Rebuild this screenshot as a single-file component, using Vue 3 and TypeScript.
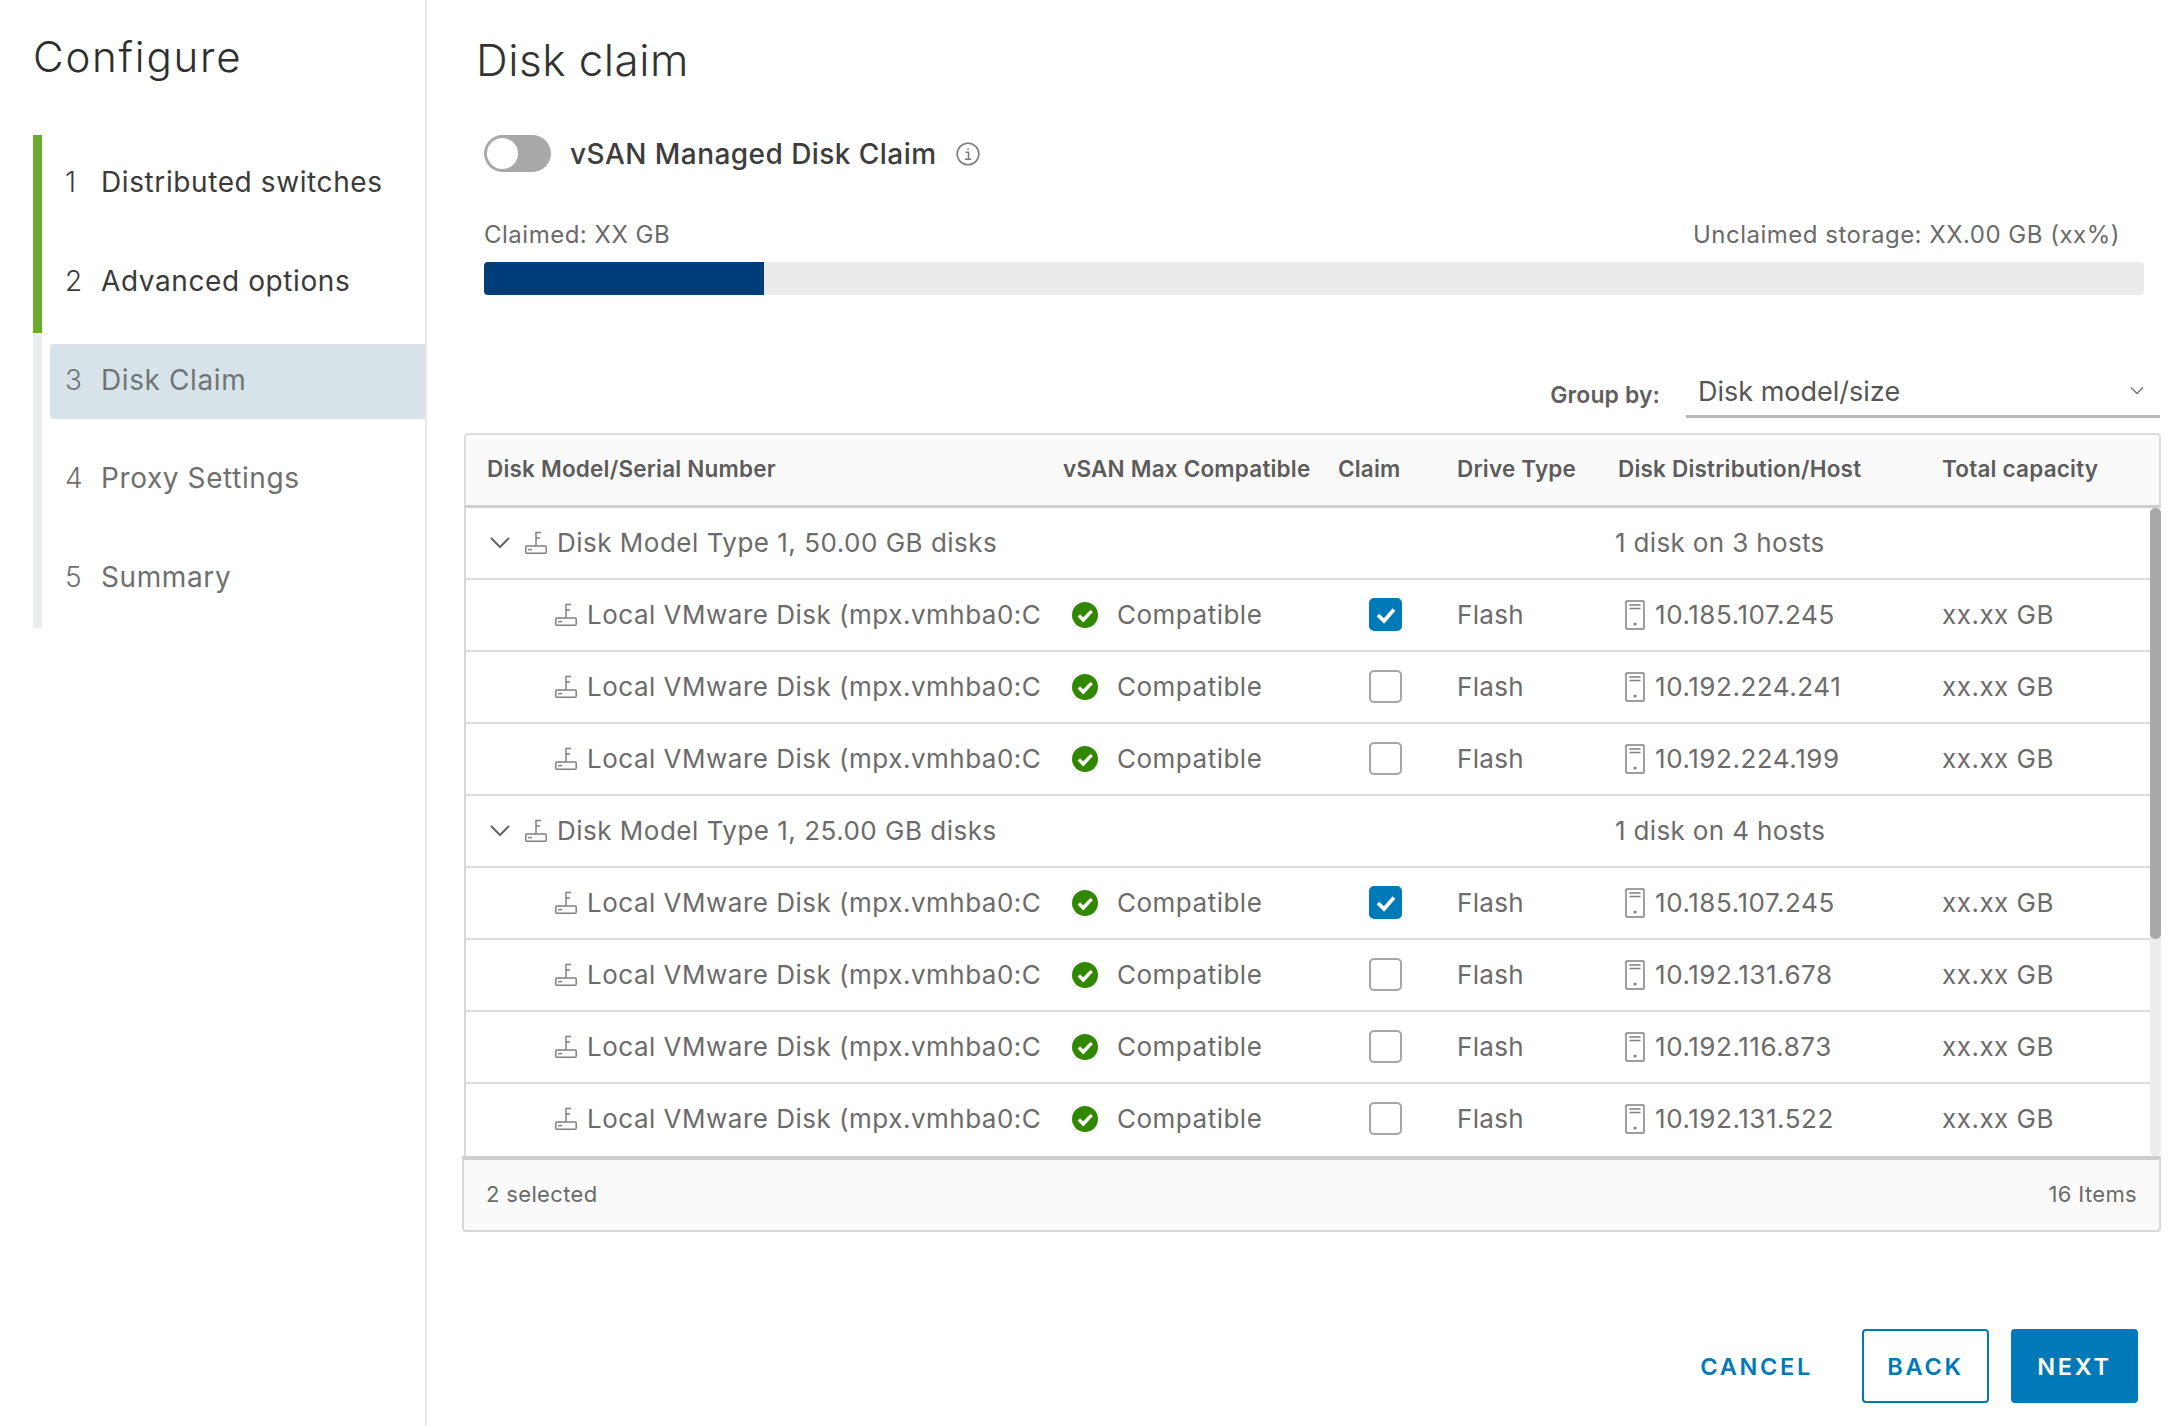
<script setup lang="ts">
interface Row {
  kind: 'group' | 'disk'
  name: string
  host?: string
  claimed?: boolean
  summary?: string
}

const steps = ['Distributed switches', 'Advanced options', 'Disk Claim', 'Proxy Settings', 'Summary']
const disk = 'Local VMware Disk (mpx.vmhba0:C'

const rows: Row[] = [
  { kind: 'group', name: 'Disk Model Type 1, 50.00 GB disks', summary: '1 disk on 3 hosts' },
  { kind: 'disk', name: disk, host: '10.185.107.245', claimed: true },
  { kind: 'disk', name: disk, host: '10.192.224.241' },
  { kind: 'disk', name: disk, host: '10.192.224.199' },
  { kind: 'group', name: 'Disk Model Type 1, 25.00 GB disks', summary: '1 disk on 4 hosts' },
  { kind: 'disk', name: disk, host: '10.185.107.245', claimed: true },
  { kind: 'disk', name: disk, host: '10.192.131.678' },
  { kind: 'disk', name: disk, host: '10.192.116.873' },
  { kind: 'disk', name: disk, host: '10.192.131.522' },
]
</script>

<template>
  <div class="page">
    <aside class="side">
      <h2 class="side-title">Configure</h2>
      <div class="wizard">
        <div class="rail"><div class="rail-done"></div></div>
        <ol class="steps">
          <li
            v-for="(s, i) in steps"
            :key="s"
            class="step"
            :class="{ done: i < 2, active: i === 2 }"
          >
            <span class="num">{{ i + 1 }}</span><span class="lbl">{{ s }}</span>
          </li>
        </ol>
      </div>
    </aside>

    <main class="main">
      <h1 class="title">Disk claim</h1>

      <div class="toggle-row">
        <span class="toggle"><span class="knob"></span></span>
        <span class="toggle-lbl">vSAN Managed Disk Claim</span>
        <svg class="info" viewBox="0 0 24 24" width="24" height="24" fill="none" stroke="#7a7a7a" stroke-width="1.5">
          <circle cx="12" cy="12" r="10.8" />
          <path d="M9.5 10.2h3v7M9 17.2h6.2" />
          <path d="M11.3 6.2h1.6v1.6h-1.6z" fill="#7a7a7a" stroke="none" />
        </svg>
      </div>

      <div class="cap-row">
        <span>Claimed: XX GB</span>
        <span>Unclaimed storage: XX.00 GB (xx%)</span>
      </div>
      <div class="bar"><div class="bar-fill"></div></div>

      <div class="group-row">
        <span class="group-lbl">Group by:</span>
        <div class="select">
          <span class="select-val">Disk model/size</span>
          <svg width="14" height="9" viewBox="0 0 14 9" fill="none" stroke="#777" stroke-width="1.5"><path d="M1 1.5l6 6 6-6" /></svg>
        </div>
      </div>

      <section class="table">
        <div class="thead cols">
          <span>Disk Model/Serial Number</span>
          <span>vSAN Max Compatible</span>
          <span>Claim</span>
          <span>Drive Type</span>
          <span>Disk Distribution/Host</span>
          <span>Total capacity</span>
        </div>
        <div class="tbody">
          <div class="rows">
            <div v-for="(r, i) in rows" :key="i" class="row cols">
              <template v-if="r.kind === 'group'">
                <div class="name group">
                  <svg class="chev" width="20" height="12" viewBox="0 0 20 12" fill="none" stroke="#666" stroke-width="2"><path d="M1 1l9 9 9-9" /></svg>
                  <svg class="dicon" width="22" height="23" viewBox="0 0 22 23" fill="none" stroke="#808080" stroke-width="1.5">
                    <path d="M11 15V1.5h5M11 7h4" />
                    <rect x="0.8" y="15" width="20.4" height="7.2" rx="1" />
                    <path d="M3 18.6h4" />
                  </svg>
                  <span class="txt">{{ r.name }}</span>
                </div>
                <span></span><span></span><span></span>
                <span class="summary">{{ r.summary }}</span>
                <span></span>
              </template>
              <template v-else>
                <div class="name disk">
                  <svg class="dicon" width="22" height="23" viewBox="0 0 22 23" fill="none" stroke="#808080" stroke-width="1.5">
                    <path d="M11 15V1.5h5M11 7h4" />
                    <rect x="0.8" y="15" width="20.4" height="7.2" rx="1" />
                    <path d="M3 18.6h4" />
                  </svg>
                  <span class="txt">{{ r.name }}</span>
                </div>
                <div class="compat">
                  <svg width="26" height="26" viewBox="0 0 26 26">
                    <circle cx="13" cy="13" r="13" fill="#318700" />
                    <path d="M6.8 13.5l4.5 4.5L19.7 8.8" fill="none" stroke="#fff" stroke-width="3.4" />
                  </svg>
                  <span>Compatible</span>
                </div>
                <div class="claim">
                  <span class="check" :class="{ on: r.claimed }">
                    <svg v-if="r.claimed" width="22" height="18" viewBox="0 0 22 18" fill="none" stroke="#fff" stroke-width="3.8"><path d="M3 9l6 6L19 3.5" /></svg>
                  </span>
                </div>
                <span class="flash">Flash</span>
                <div class="host">
                  <svg width="20" height="30" viewBox="0 0 20 30" fill="none" stroke="#808080" stroke-width="1.5">
                    <rect x="1" y="1" width="18" height="28" rx="1" />
                    <path d="M4.5 5h11M4.5 8.5h11" />
                    <circle cx="10" cy="24" r="1.6" fill="#808080" stroke="none" />
                  </svg>
                  <span class="ip">{{ r.host }}</span>
                </div>
                <span>xx.xx GB</span>
              </template>
            </div>
          </div>
          <div class="scroll"><div class="thumb"></div></div>
        </div>
        <div class="tfoot">
          <span>2 selected</span>
          <span>16 Items</span>
        </div>
      </section>

      <div class="actions">
        <button class="btn link">CANCEL</button>
        <button class="btn outline">BACK</button>
        <button class="btn solid">NEXT</button>
      </div>
    </main>
  </div>
</template>

<style>
html, body { margin: 0; background: #fff; }
</style>

<style scoped>
.page {
  display: flex;
  width: 2176px;
  height: 1426px;
  overflow: hidden;
  background: #fff;
  font-family: Inter, "Liberation Sans", sans-serif;
  color: #5f5f5f;
}
.side {
  width: 427px;
  flex: none;
  box-sizing: border-box;
  border-right: 2px solid #e8e8e8;
  padding-left: 33px;
}
.side-title {
  margin: 0;
  height: 135px;
  box-sizing: border-box;
  padding-top: 31px;
  font-size: 42px;
  line-height: 52px;
  font-weight: 300;
  color: #2e2e2e;
  letter-spacing: 1.8px;
}
.wizard { display: flex; gap: 8px; }
.rail { width: 9px; height: 493px; background: #ebecee; }
.rail-done { height: 198px; background: #6aa92a; }
.steps {
  flex: 1;
  list-style: none;
  margin: 0;
  padding: 11px 0 0;
}
.step {
  display: flex;
  align-items: center;
  height: 75px;
  margin-bottom: 23.75px;
  box-sizing: border-box;
  padding: 0 0 3px 15px;
  font-size: 28px;
  color: #6f6f6f;
  border-radius: 4px 0 0 4px;
  letter-spacing: 0.6px;
}
.step.done { color: #3a3a3a; }
.step.active { background: #d8e3e9; color: #6f7578; }
.num { width: 36px; flex: none; font-weight: 300; }
.lbl { white-space: nowrap; }

.main {
  flex: 1;
  min-width: 0;
  display: flex;
  flex-direction: column;
  padding: 0 16px 0 38px;
}
.title {
  margin: 30px 0 0 11px;
  font-size: 44px;
  line-height: 60px;
  font-weight: 300;
  color: #333;
  letter-spacing: 0.5px;
}
.toggle-row {
  display: flex;
  align-items: center;
  margin: 45px 0 0 19px;
  height: 37px;
}
.toggle {
  width: 67px;
  height: 37px;
  border-radius: 19px;
  background: #a8a8a8;
  position: relative;
}
.knob {
  position: absolute;
  left: 3px;
  top: 3px;
  width: 31px;
  height: 31px;
  border-radius: 50%;
  background: #fff;
}
.toggle-lbl {
  margin-left: 19px;
  font-size: 28px;
  font-weight: 500;
  color: #3d3d3d;
  letter-spacing: 0.45px;
}
.info { margin-left: 19px; }
.cap-row {
  display: flex;
  justify-content: space-between;
  margin: 48px 40px 0 19px;
  font-size: 24px;
  line-height: 30px;
  color: #6a6a6a;
  letter-spacing: 0.5px;
}
.bar {
  margin: 12px 16px 0 19px;
  height: 33px;
  border-radius: 4px;
  background: #ebebeb;
  overflow: hidden;
}
.bar-fill { width: 280px; height: 100%; background: #003d79; }
.group-row {
  display: flex;
  justify-content: flex-end;
  align-items: center;
  gap: 26px;
  margin-top: 75px;
}
.group-lbl { font-size: 23px; font-weight: 600; color: #5f5f5f; padding-top: 2px; letter-spacing: 0.1px; }
.select {
  width: 474px;
  height: 48px;
  box-sizing: border-box;
  display: flex;
  justify-content: space-between;
  align-items: center;
  padding: 0 16px 4px 12px;
  border-bottom: 3px solid #b8b8b8;
  font-size: 27px;
  color: #555;
}
.select-val { padding-top: 2px; }
.table {
  margin: 15px 0 0 -1px;
  width: 1697px;
  display: flex;
  flex-direction: column;
}
.cols {
  display: grid;
  grid-template-columns: 576px 275px 119px 161px 324px 1fr;
  align-items: center;
  padding-left: 21px;
}
.thead {
  height: 75px;
  box-sizing: border-box;
  padding-bottom: 3px;
  background: #fafafa;
  border: 2px solid #dcdcdc;
  border-bottom: 3px solid #cfcfcf;
  border-radius: 4px 4px 0 0;
  font-size: 22.5px;
  font-weight: 600;
  color: #5c5c5c;
  white-space: nowrap;
  letter-spacing: 0.2px;
}
.thead > span { display: block; }
.tbody {
  display: flex;
  border-left: 2px solid #d8d8d8;
}
.rows { flex: 1; min-width: 0; }
.row {
  height: 72px;
  box-sizing: border-box;
  padding-bottom: 1px;
  border-bottom: 2px solid #dedede;
  font-size: 26px;
  color: #6b6b6b;
  white-space: nowrap;
  letter-spacing: 0.5px;
}
.row:last-child { border-bottom-color: transparent; }
.name { display: flex; align-items: center; min-width: 0; }
.name.group { padding-left: 3px; }
.name.disk { padding-left: 68px; }
.name.group .dicon { margin-left: 15px; flex: none; }
.name.disk .dicon { flex: none; }
.chev { flex: none; }
.txt { margin-left: 10px; white-space: nowrap; }
.compat { display: flex; align-items: center; padding-left: 9px; gap: 19px; }
.claim { padding-left: 31px; display: flex; }
.check {
  width: 33px;
  height: 33px;
  box-sizing: border-box;
  border: 2px solid #a6a6a6;
  border-radius: 5px;
  display: flex;
  align-items: center;
  justify-content: center;
}
.check.on { background: #0079b8; border-color: #0079b8; }
.host { display: flex; align-items: center; padding-left: 7px; gap: 10px; }
.ip { letter-spacing: 0.55px; }
.flash { letter-spacing: 0.35px; }
.summary { margin-left: -3px; letter-spacing: 0.35px; }
.scroll { width: 11px; background: #ececec; border-radius: 5px; }
.thumb { height: 431px; background: #a9a9a9; border-radius: 5px; }
.tfoot {
  height: 76px;
  box-sizing: border-box;
  padding: 0 22px 2px 22px;
  margin-left: -2px;
  display: flex;
  align-items: center;
  justify-content: space-between;
  background: #fafafa;
  border: 2px solid #d8d8d8;
  border-top: 4px solid #cdcdcd;
  border-radius: 0 0 4px 4px;
  font-size: 22px;
  color: #6a6a6a;
  letter-spacing: 0.35px;
}
.actions {
  display: flex;
  justify-content: flex-end;
  align-items: center;
  gap: 22px;
  margin: 97px 22px 0 0;
}
.btn {
  width: 127px;
  height: 74px;
  box-sizing: border-box;
  border-radius: 4px;
  font-family: inherit;
  font-size: 23.5px;
  font-weight: 600;
  letter-spacing: 2.7px;
  padding: 0;
  background: transparent;
  border: 2px solid transparent;
  color: #0079b8;
}
.btn.link { width: auto; margin-right: 25px; }
.btn.outline { border-color: #0079b8; }
.btn.solid { background: #0079b8; border-color: #0079b8; color: #fff; }
</style>
